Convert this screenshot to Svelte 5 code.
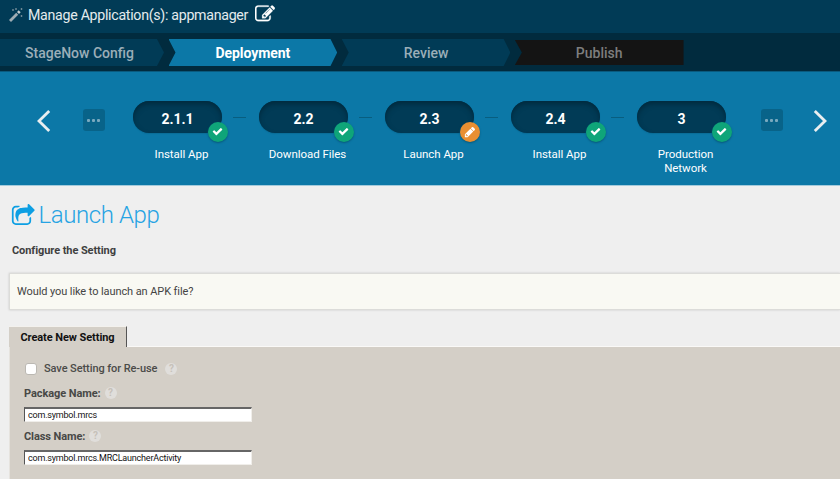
<script>
  const steps = [
    { number: '2.1.1', label: 'Install App' },
    { number: '2.2', label: 'Download Files' },
    { number: '2.3', label: 'Launch App', editing: true },
    { number: '2.4', label: 'Install App' },
    { number: '3', label: 'Production Network' }
  ];
  let packageName = $state('com.symbol.mrcs');
  let className = $state('com.symbol.mrcs.MRCLauncherActivity');
</script>

{#snippet help()}
  <span class="help">?</span>
{/snippet}

<div class="page">
  <header>
    <svg class="wand" viewBox="0 0 14 14"><path d="M1 13 8.2 5.8" stroke="#9eacb3" stroke-width="2.8"/><path d="m9 5 1.7-1.7" stroke="#c4cdd1" stroke-width="2.8"/><path d="M4 1v2M3 2h2M7 0v2M6 1h2M12.5 0v2M11.5 1h2M12.5 7v2M11.5 8h2" stroke="#7f949e" stroke-width=".8"/></svg>
    <span class="title">Manage Application(s): appmanager</span>
    <svg class="edit" viewBox="0 0 1792 1792"><path fill="#fff" d="M888 1184l116-116-152-152-116 116v56h96v96h56zm440-720q-16-16-33 1l-350 350q-17 17-1 33t33-1l350-350q17-17 1-33zm80 594v190q0 119-84.5 203.5t-203.5 84.5h-832q-119 0-203.5-84.5t-84.5-203.5v-832q0-119 84.5-203.5t203.5-84.5h832q63 0 117 25 15 7 18 23 3 17-9 29l-49 49q-14 14-32 8-23-6-45-6h-832q-66 0-113 47t-47 113v832q0 66 47 113t113 47h832q66 0 113-47t47-113v-126q0-13 9-22l64-64q15-15 35-7t20 29zm-96-738l288 288-672 672h-288v-288zm444 132l-92 92-288-288 92-92q28-28 68-28t68 28l152 152q28 28 28 68t-28 68z"/></svg>
  </header>

  <nav>
    <div class="stage first"><span>StageNow Config</span></div>
    <div class="stage active"><span>Deployment</span></div>
    <div class="stage"><span>Review</span></div>
    <div class="stage last"><span>Publish</span></div>
  </nav>

  <section class="flow">
    <svg class="arrow" viewBox="0 0 14 22"><path d="M12.2 1 2 11l10.2 10" /></svg>
    <div class="more left"><i></i><i></i><i></i></div>
    <div class="steps">
      {#each steps as step, i}
        <div class="step">
          <div class="pill">
            {step.number}
            <span class="badge" class:editing={step.editing}>
              {#if step.editing}
                <svg viewBox="0 0 1792 1792"><path d="M491 1536l91-91-235-235-91 91v107h128v128h107zm469-1120l416 416-832 832h-416v-416zm683 96q0 53-37 90l-166 166-416-416 166-165q36-38 90-38 53 0 91 38l235 234q37 39 37 91z"/></svg>
              {:else}
                <svg viewBox="0 0 1792 1792"><path d="M1671 566q0 40-28 68l-724 724-136 136q-28 28-68 28t-68-28l-136-136-362-362q-28-28-28-68t28-68l136-136q28-28 68-28t68 28l294 295 656-657q28-28 68-28t68 28l136 136q28 28 28 68z"/></svg>
              {/if}
            </span>
          </div>
          <div class="label">{step.label}</div>
        </div>
        {#if i < steps.length - 1}<div class="link"></div>{/if}
      {/each}
    </div>
    <div class="more right"><i></i><i></i><i></i></div>
    <svg class="arrow next" viewBox="0 0 14 22"><path d="m1.8 1 10.2 10L1.8 21" /></svg>
  </section>

  <main>
    <h1>
      <svg viewBox="0 0 1792 1792"><path fill="#0d9fe3" d="M1472 989v259q0 119-84.5 203.5t-203.5 84.5h-832q-119 0-203.5-84.5t-84.5-203.5v-832q0-119 84.5-203.5t203.5-84.5h255q13 0 22.5 9.5t9.5 22.5q0 27-26 32-77 26-133 60-10 4-16 4h-112q-66 0-113 47t-47 113v832q0 66 47 113t113 47h832q66 0 113-47t47-113v-214q0-19 18-29 28-13 54-37 16-16 35-8 21 9 21 29zm237-496l-384 384q-18 19-45 19-12 0-25-5-39-17-39-59v-192h-160q-323 0-438 131-119 137-74 473 3 23-20 34-8 2-12 2-16 0-26-13-10-14-21-31t-39.5-68.5-49.5-99.5-38.5-114-17.5-122q0-49 3.5-91t14-90 28-88 47-81.5 68.5-74 94.5-61.5 124.5-48.5 159.5-30.5 196.5-11h160v-192q0-42 39-59 13-5 25-5 26 0 45 19l384 384q19 19 19 45t-19 45z"/></svg>
      <span>Launch App</span>
    </h1>
    <h2>Configure the Setting</h2>
    <div class="question">Would you like to launch an APK file?</div>
    <div class="tab">Create New Setting</div>
    <form>
      <label class="reuse"><input type="checkbox" /><span>Save Setting for Re-use</span>{@render help()}</label>
      <div class="field"><span>Package Name:</span>{@render help()}</div>
      <input type="text" aria-label="Package Name" bind:value={packageName} />
      <div class="field second"><span>Class Name:</span>{@render help()}</div>
      <input type="text" aria-label="Class Name" bind:value={className} />
    </form>
  </main>
</div>

<style>
  .page { width: 840px; height: 479px; overflow: hidden; background: #efefef; font-family: Roboto, "Liberation Sans", sans-serif; font-size: 11px; }
  .page, .page * { box-sizing: border-box; }
  header { height: 33px; background: #013b56; display: flex; align-items: flex-start; padding: 6px 0 0 9px; }
  .wand { width: 14px; height: 14px; margin-top: 2px; }
  .title { margin-left: 5px; width: 221px; font-size: 14.2px; letter-spacing: -.29px; line-height: 18px; color: #e4ebee; white-space: nowrap; }
  .edit { width: 20px; height: 20px; margin: -2px 0 0 6px; stroke: #fff; stroke-width: 25px; }
  nav { height: 39px; background: #012b3e; border-bottom: 1px solid #0a5a7e; padding-top: 6px; display: flex; gap: 4.5px; }
  .stage { width: 168.7px; height: 27px; background: #013b56; color: #9baeb8; font-size: 14px; font-weight: 500; line-height: 28px; text-align: center; clip-path: polygon(0 0, 162px 0, 100% 50%, 162px 100%, 0 100%, 7px 50%); }
  .stage.first { width: 164px; padding-right: 5px; clip-path: polygon(0 0, 157px 0, 100% 50%, 157px 100%, 0 100%); }
  .stage.active { background: #0c78a7; color: #fff; font-weight: 700; letter-spacing: -.08px; }
  .stage.last { margin-top: 1px; height: 25px; line-height: 26px; background: #141414; color: #7e7e7e; clip-path: polygon(0 0, 100% 0, 100% 100%, 0 100%, 7px 50%); }
  .flow { height: 114px; background: #0c78a7; border-bottom: 1px solid #a4cbdc; display: flex; align-items: flex-start; padding: 29px 0 0 37px; }
  .arrow { width: 14px; height: 22px; margin-top: 9px; flex: none; }
  .arrow path { fill: none; stroke: #e9eef0; stroke-width: 2.8; }
  .more { width: 22px; height: 22px; margin-top: 8px; border-radius: 3px; background: #086389; display: flex; align-items: center; justify-content: center; gap: 2px; flex: none; }
  .more i { width: 3px; height: 3px; border-radius: 1px; background: #79a9bf; }
  .more.left { margin-left: 31.5px; }
  .more.right { margin-left: 25px; }
  .arrow.next { margin-left: 30px; }
  .steps { display: flex; margin-left: 28px; }
  .step { width: 99px; flex: none; }
  .pill { position: relative; width: 89px; height: 32px; border-radius: 16px; background: #013b56; box-shadow: inset 0 3px 5px #012a3e, 0 1px 1px #0a6d98; color: #fff; font-size: 14px; font-weight: 700; line-height: 36px; padding-left: 1px; text-align: center; }
  .badge { position: absolute; left: 75px; top: 20.5px; width: 20px; height: 20px; border-radius: 50%; background: #0fa579; box-shadow: 0 1px 2px #07587b; display: flex; align-items: center; justify-content: center; }
  .badge.editing { background: #e88f32; }
  .badge svg { width: 11px; height: 11px; fill: #fff; }
  .badge.editing svg { width: 12px; height: 12px; }
  .link { width: 13px; height: 1px; margin: 16px 13px 0 1px; background: #085e80; }
  .label { width: 88px; margin: 14px 0 0 5px; text-align: center; color: #fff; font-size: 11.5px; letter-spacing: -.04px; line-height: 14px; }
  h1 { margin: 0; display: flex; align-items: center; height: 30px; font-size: 24px; font-weight: 300; color: #26a3e3; line-height: 29px; }
  h1 svg { width: 24.5px; height: 24.5px; margin: 2px 0 0 -1.5px; }
  h1 span { margin-left: 3.5px; letter-spacing: -.4px; }
  main { padding: 14px 0 0 12px; }
  h2 { margin: 14px 0 0; font-size: 11px; letter-spacing: -.08px; line-height: 14px; font-weight: 700; color: #3f3f3f; }
  .question { margin: 15px 0 0 -3px; height: 37px; background: #f9f9f3; border: 1px solid #dcdcd9; border-right: 0; box-shadow: 0 0 2px #c7c7c7; padding-left: 7px; line-height: 36px; font-size: 11px; letter-spacing: -.09px; color: #444; }
  .tab { margin: 16px 0 0 -3px; width: 118px; height: 21px; background: #d4cfc7; border-right: 1px solid #555; border-top: 1px solid #f3f1ed; font-size: 11px; font-weight: 700; letter-spacing: -.07px; line-height: 21px; text-align: center; color: #111; position: relative; z-index: 1; }
  form { margin: -1px 0 0 -3px; height: 134px; background: #d4cfc7; border-top: 1px solid #faf9f7; border-left: 1px solid #e6e3de; padding: 14px 0 0 14px; }
  .reuse { display: flex; align-items: center; height: 15px; font-weight: 500; letter-spacing: -.08px; color: #4b4b49; }
  .reuse input { appearance: none; width: 12px; height: 12px; margin: 0 7.5px 0 .5px; background: #fff; border: 1px solid #bbb8b2; border-radius: 3px; }
  .help { width: 12px; height: 12px; margin-left: 8px; border-radius: 50%; background: #e0dedb; color: #c6c1b9; font-size: 10px; font-weight: 700; line-height: 12px; text-align: center; }
  .field { display: flex; align-items: center; height: 14px; margin-top: 10px; color: #484846; font-weight: 700; letter-spacing: -.08px; }
  .field .help { margin-left: 4px; }
  input[type="text"] { display: block; width: 228px; height: 15px; margin: 7px 0 0; padding: 0 0 0 3px; border: 1px solid #f0eeea; border-top: 2px solid #666; border-left: 1px solid #555; border-radius: 0; background: #fff; color: #111; font: 9px/12px Roboto, "Liberation Sans", sans-serif; letter-spacing: -.2px; outline: none; }
  .field.second { margin-top: 7px; }
</style>
